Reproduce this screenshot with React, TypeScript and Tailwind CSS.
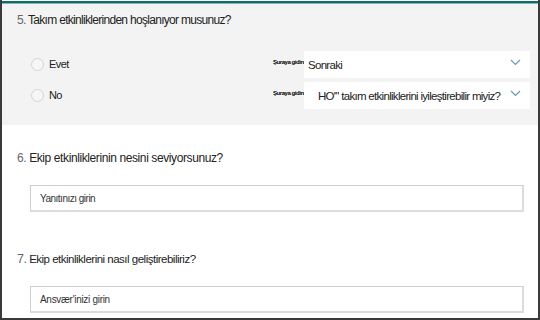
import React from "react";

const Chevron = () => (
  <svg width="11" height="7" viewBox="0 0 11 7" className="shrink-0">
    <polyline points="1,1 5.5,5.5 10,1" fill="none" stroke="#6b9aa6" strokeWidth="1.2" />
  </svg>
);

const Radio = ({ label }: { label: string }) => (
  <div className="flex items-center w-[271px] shrink-0">
    <div className="ml-[29px] w-[13px] h-[13px] rounded-full border border-[#d4d4d4] bg-[#f6f6f6]" />
    <span className="ml-[5px] text-[11px] text-[#222] tracking-[-0.6px]">{label}</span>
  </div>
);

const Dropdown = ({ text, pl }: { text: string; pl: string }) => (
  <div className="flex items-start h-[27px]">
    <span className="w-[31px] shrink-0 text-[6px] leading-[8px] mt-[7px] text-black font-semibold tracking-[-0.45px] whitespace-nowrap">
      Şuraya gidin:
    </span>
    <div className={`w-[226px] h-[27px] bg-white flex items-center justify-between pr-[9px] ${pl}`}>
      <span className="text-[11.5px] text-[#222] tracking-[-0.7px] whitespace-nowrap mt-[2px]">{text}</span>
      <div className="-mt-[4px]">
        <Chevron />
      </div>
    </div>
  </div>
);

export default function App() {
  return (
    <div
      className="w-[540px] h-[320px] bg-white border-x-2 border-b-2 border-[#3a3a3a] overflow-hidden"
      style={{ fontFamily: '"Liberation Sans", Arial, sans-serif' }}
    >
      <div className="h-[1px] bg-white" />
      <div className="h-[2px] bg-[#12696a]" />
      <div className="h-[1px] bg-[#7bb8b8]" />
      <div className="bg-[#f3f3f3] h-[121px] pt-[8px]">
        <div className="pl-[15px] h-[16px] leading-[16px] text-[12px] text-[#222] tracking-[-0.7px]">
          <span className="text-[#666]">5.</span> Takım etkinliklerinden hoşlanıyor musunuz?
        </div>
        <div className="mt-[23px] flex flex-col gap-[4px]">
          <div className="flex items-center h-[27px]">
            <Radio label="Evet" />
            <Dropdown text="Sonraki" pl="pl-[4px]" />
          </div>
          <div className="flex items-center h-[27px]">
            <Radio label="No" />
            <Dropdown text={'HO\'" takım etkinliklerini iyileştirebilir miyiz?'} pl="pl-[14px]" />
          </div>
        </div>
      </div>
      <div className="pt-[25px]">
        <div className="pl-[15px] h-[16px] leading-[16px] text-[12px] text-[#222] tracking-[-0.4px]">
          <span className="text-[#666]">6.</span> Ekip etkinliklerinin nesini seviyorsunuz?
        </div>
        <div className="mt-[19px] ml-[28px] w-[494px] h-[27px] border border-[#cfcfcf] border-r-2 border-b-2 border-r-[#dcdcdc] border-b-[#dcdcdc] flex items-center pl-[9px]">
          <span className="text-[10px] text-[#333] tracking-[-0.5px]">Yanıtınızı girin</span>
        </div>
        <div className="mt-[39px] pl-[15px] h-[16px] leading-[16px] text-[11.5px] text-[#222] tracking-[-0.5px]">
          <span className="text-[#666] text-[12.5px]">7.</span> Ekip etkinliklerini nasıl geliştirebiliriz?
        </div>
        <div className="mt-[19px] ml-[28px] w-[494px] h-[27px] border border-[#cfcfcf] border-r-2 border-b-2 border-r-[#dcdcdc] border-b-[#dcdcdc] flex items-center pl-[9px]">
          <span className="text-[10px] text-[#333] tracking-[-0.3px]">Ansvær'inizi girin</span>
        </div>
      </div>
    </div>
  );
}
